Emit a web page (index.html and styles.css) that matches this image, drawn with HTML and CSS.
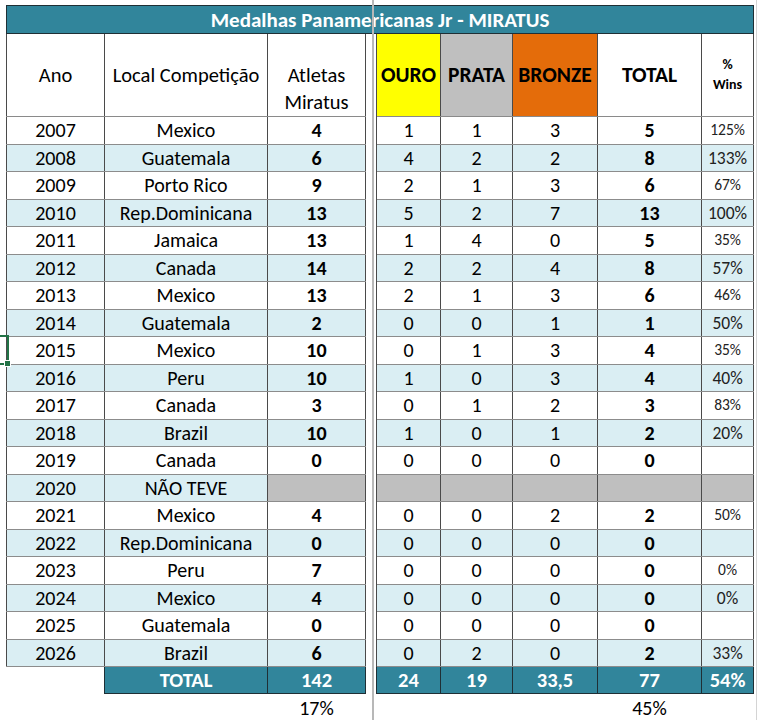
FILE: index.html
```html
<!DOCTYPE html>
<html lang="pt">
<head>
<meta charset="utf-8">
<title>Medalhas Panamericanas Jr - MIRATUS</title>
<link rel="stylesheet" href="styles.css">
</head>
<body>
<div class="sheet">
  <table class="grid">
    <colgroup>
      <col class="c-ano"><col class="c-local"><col class="c-atl"><col class="c-gap"><col class="c-ouro"><col class="c-prata"><col class="c-bronze"><col class="c-total"><col class="c-pct">
    </colgroup>
    <tr class="title"><th colspan="9">Medalhas Panamericanas Jr - MIRATUS</th></tr>
    <tr class="head">
      <th>Ano</th>
      <th>Local Competição</th>
      <th class="atl-h">Atletas<br>Miratus</th>
      <th class="gap"></th>
      <th class="ouro">OURO</th>
      <th class="prata">PRATA</th>
      <th class="bronze">BRONZE</th>
      <th class="tot-h">TOTAL</th>
      <th class="pct-h">%<br>Wins</th>
    </tr>
    <tr class="data"><td>2007</td><td>Mexico</td><td class="b">4</td><td class="gap"></td><td>1</td><td>1</td><td>3</td><td class="b">5</td><td class="pct">125%</td></tr>
    <tr class="data alt"><td>2008</td><td>Guatemala</td><td class="b">6</td><td class="gap"></td><td>4</td><td>2</td><td>2</td><td class="b">8</td><td class="pct">133%</td></tr>
    <tr class="data"><td>2009</td><td>Porto Rico</td><td class="b">9</td><td class="gap"></td><td>2</td><td>1</td><td>3</td><td class="b">6</td><td class="pct">67%</td></tr>
    <tr class="data alt"><td>2010</td><td>Rep.Dominicana</td><td class="b">13</td><td class="gap"></td><td>5</td><td>2</td><td>7</td><td class="b">13</td><td class="pct">100%</td></tr>
    <tr class="data"><td>2011</td><td>Jamaica</td><td class="b">13</td><td class="gap"></td><td>1</td><td>4</td><td>0</td><td class="b">5</td><td class="pct">35%</td></tr>
    <tr class="data alt"><td>2012</td><td>Canada</td><td class="b">14</td><td class="gap"></td><td>2</td><td>2</td><td>4</td><td class="b">8</td><td class="pct">57%</td></tr>
    <tr class="data"><td>2013</td><td>Mexico</td><td class="b">13</td><td class="gap"></td><td>2</td><td>1</td><td>3</td><td class="b">6</td><td class="pct">46%</td></tr>
    <tr class="data alt"><td>2014</td><td>Guatemala</td><td class="b">2</td><td class="gap"></td><td>0</td><td>0</td><td>1</td><td class="b">1</td><td class="pct">50%</td></tr>
    <tr class="data"><td>2015</td><td>Mexico</td><td class="b">10</td><td class="gap"></td><td>0</td><td>1</td><td>3</td><td class="b">4</td><td class="pct">35%</td></tr>
    <tr class="data alt"><td>2016</td><td>Peru</td><td class="b">10</td><td class="gap"></td><td>1</td><td>0</td><td>3</td><td class="b">4</td><td class="pct">40%</td></tr>
    <tr class="data"><td>2017</td><td>Canada</td><td class="b">3</td><td class="gap"></td><td>0</td><td>1</td><td>2</td><td class="b">3</td><td class="pct">83%</td></tr>
    <tr class="data alt"><td>2018</td><td>Brazil</td><td class="b">10</td><td class="gap"></td><td>1</td><td>0</td><td>1</td><td class="b">2</td><td class="pct">20%</td></tr>
    <tr class="data"><td>2019</td><td>Canada</td><td class="b">0</td><td class="gap"></td><td>0</td><td>0</td><td>0</td><td class="b">0</td><td class="pct"></td></tr>
    <tr class="data alt"><td>2020</td><td>NÃO TEVE</td><td class="none"></td><td class="gap"></td><td class="none"></td><td class="none"></td><td class="none"></td><td class="none"></td><td class="none"></td></tr>
    <tr class="data"><td>2021</td><td>Mexico</td><td class="b">4</td><td class="gap"></td><td>0</td><td>0</td><td>2</td><td class="b">2</td><td class="pct">50%</td></tr>
    <tr class="data alt"><td>2022</td><td>Rep.Dominicana</td><td class="b">0</td><td class="gap"></td><td>0</td><td>0</td><td>0</td><td class="b">0</td><td class="pct"></td></tr>
    <tr class="data"><td>2023</td><td>Peru</td><td class="b">7</td><td class="gap"></td><td>0</td><td>0</td><td>0</td><td class="b">0</td><td class="pct">0%</td></tr>
    <tr class="data alt"><td>2024</td><td>Mexico</td><td class="b">4</td><td class="gap"></td><td>0</td><td>0</td><td>0</td><td class="b">0</td><td class="pct">0%</td></tr>
    <tr class="data"><td>2025</td><td>Guatemala</td><td class="b">0</td><td class="gap"></td><td>0</td><td>0</td><td>0</td><td class="b">0</td><td class="pct"></td></tr>
    <tr class="data alt"><td>2026</td><td>Brazil</td><td class="b">6</td><td class="gap"></td><td>0</td><td>2</td><td>0</td><td class="b">2</td><td class="pct">33%</td></tr>
    <tr class="totals"><td class="blank"></td><td class="t">TOTAL</td><td class="t">142</td><td class="gap"></td><td class="t">24</td><td class="t">19</td><td class="t">33,5</td><td class="t">77</td><td class="t">54%</td></tr>
    <tr class="foot"><td></td><td></td><td>17%</td><td></td><td></td><td></td><td></td><td>45%</td><td></td></tr>
  </table>
  <div class="pane-line"></div>
  <div class="edge-line"></div>
  <div class="selection"></div>
  <div class="fill-handle"></div>
</div>
</body>
</html>
```

FILE: styles.css
```css
html, body {
  margin: 0;
  background: #ffffff;
}
body {
  font-family: Carlito, Lato, "Open Sans", sans-serif;
  color: #000;
}
.sheet {
  position: relative;
  width: 759px;
  height: 720px;
  overflow: hidden;
  box-sizing: border-box;
  padding: 5px 0 0 6px;
}
.grid {
  border-collapse: collapse;
  table-layout: fixed;
  width: 747px;
}
.c-ano { width: 98px; }
.c-local { width: 163px; }
.c-atl { width: 98px; }
.c-gap { width: 11px; }
.c-ouro { width: 64px; }
.c-prata { width: 72px; }
.c-bronze { width: 85px; }
.c-total { width: 104px; }
.c-pct { width: 52px; }

.grid th, .grid td {
  padding: 0;
  text-align: center;
  white-space: nowrap;
  overflow: hidden;
}

.title th {
  height: 27px;
  background: #31859b;
  color: #fff;
  font-weight: bold;
  font-size: 21px;
  line-height: 26px;
  border: 1px solid #1f2f35;
}

.head th {
  height: 82px;
  font-weight: normal;
  font-size: 20.5px;
  border: 1px solid #4a4a4a;
  border-bottom-color: #8a8a8a;
  vertical-align: middle;
}
.head .atl-h {
  vertical-align: bottom;
  line-height: 27px;
}
.head .ouro, .head .prata, .head .bronze, .head .tot-h {
  font-weight: bold;
  font-size: 21.5px;
}
.head .ouro { background: #ffff00; }
.head .prata { background: #bfbfbf; }
.head .bronze { background: #e46c0a; }
.head .pct-h {
  font-weight: bold;
  font-size: 14px;
  line-height: 20px;
}

.data td {
  height: 26.5px;
  font-size: 20px;
  line-height: 24px;
  border-left: 1px solid #4a4a4a;
  border-right: 1px solid #4a4a4a;
  border-bottom: 1px solid #8c8c8c;
}
.data.alt td { background: #daeef3; }
.data td.b { font-weight: bold; }
.data td.pct {
  font-size: 15.5px;
  color: #222;
}
.data.alt td.pct { font-size: 17.5px; }
.data td.none, .data.alt td.none { background: #bfbfbf; }

.grid .gap,
.data.alt td.gap {
  background: #fff;
  border-top: none;
  border-bottom: none;
}

.totals td {
  height: 26px;
  font-size: 20.5px;
  line-height: 24px;
}
.totals td.t {
  background: #31859b;
  color: #fff;
  font-weight: bold;
  border: 1px solid #1f2f35;
}
.totals td.blank {
  border: none;
  border-top: 1px solid #4a4a4a;
}

.foot td {
  height: 28px;
  font-size: 20px;
  line-height: 28px;
  border: none;
}

.pane-line {
  position: absolute;
  left: 372px;
  top: 0;
  width: 2px;
  height: 720px;
  background: #b8b8b8;
}
.edge-line {
  position: absolute;
  left: 756px;
  top: 0;
  width: 1px;
  height: 720px;
  background: #d4d4d4;
}
.selection {
  position: absolute;
  left: -4px;
  top: 335px;
  width: 9px;
  height: 26px;
  border: 2px solid #217346;
}
.fill-handle {
  position: absolute;
  left: 4px;
  top: 360px;
  width: 5px;
  height: 5px;
  background: #217346;
  border: 1px solid #fff;
}
```
